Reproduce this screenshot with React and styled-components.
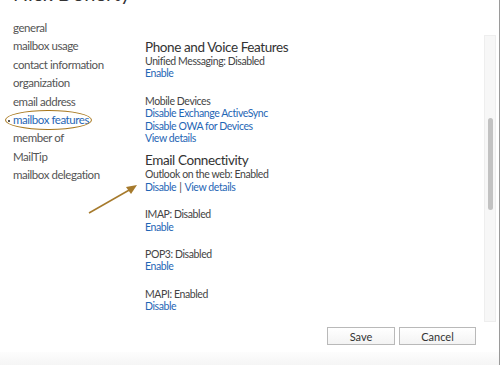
import React from "react";
import styled, { createGlobalStyle } from "styled-components";

const GlobalStyle = createGlobalStyle`
  html, body { margin: 0; padding: 0; background: #fff; }
  body { font-family: Lato, "Open Sans", sans-serif; overflow: hidden; }
`;

const navItems = [
  "general",
  "mailbox usage",
  "contact information",
  "organization",
  "email address",
  "mailbox features",
  "member of",
  "MailTip",
  "mailbox delegation",
];

const sections = [
  {
    title: "Phone and Voice Features",
    items: [
      { label: "Unified Messaging: Disabled", links: [["Enable"]] },
      {
        label: "Mobile Devices",
        links: [["Disable Exchange ActiveSync"], ["Disable OWA for Devices"], ["View details"]],
      },
    ],
  },
  {
    title: "Email Connectivity",
    items: [
      { label: "Outlook on the web: Enabled", links: [["Disable", "View details"]] },
      { label: "IMAP: Disabled", links: [["Enable"]] },
      { label: "POP3: Disabled", links: [["Enable"]] },
      { label: "MAPI: Enabled", links: [["Disable"]] },
    ],
  },
];

function App() {
  return (
    <>
      <GlobalStyle />
      <Page>
        <Header>
          <Title>Nick Doherty</Title>
        </Header>
        <Main>
          <Nav>
            {navItems.map((item) => (
              <NavItem key={item} $active={item === "mailbox features"}>
                {item}
              </NavItem>
            ))}
          </Nav>
          <Content>
            {sections.map((s) => (
              <Section key={s.title}>
                <SectionTitle>{s.title}</SectionTitle>
                {s.items.map((it) => (
                  <Item key={it.label}>
                    <Label>{it.label}</Label>
                    {it.links.map((row, i) => (
                      <LinkRow key={i}>
                        {row.map((l, j) => (
                          <React.Fragment key={l}>
                            {j > 0 && <Sep>|</Sep>}
                            <Link>{l}</Link>
                          </React.Fragment>
                        ))}
                      </LinkRow>
                    ))}
                  </Item>
                ))}
              </Section>
            ))}
          </Content>
          <ScrollTrack>
            <ScrollThumb />
          </ScrollTrack>
          <Arrow width="60" height="40" viewBox="0 0 60 40">
            <line x1="2" y1="31" x2="44" y2="7" stroke="#a67a2c" strokeWidth="1.5" />
            <polygon points="50,3 39,5 44,12" fill="#a67a2c" />
          </Arrow>
        </Main>
        <Footer>
          <Button $w={68}>Save</Button>
          <Button $w={77}>Cancel</Button>
        </Footer>
        <BottomStrip />
      </Page>
    </>
  );
}

const Page = styled.div`
  width: 499px;
  height: 365px;
  border-right: 1px solid #9a9a9a;
  display: flex;
  flex-direction: column;
  overflow: hidden;
`;

const Header = styled.div`
  height: 8px;
  padding-left: 13px;
`;

const Title = styled.div`
  margin-top: -17px;
  font-size: 20px;
  line-height: 20px;
  color: #333;
`;

const Main = styled.div`
  position: relative;
  height: 312px;
  display: flex;
`;

const Nav = styled.div`
  width: 132px;
  padding: 11px 0 0 13px;
  display: flex;
  flex-direction: column;
  align-items: flex-start;
`;

const NavItem = styled.div`
  position: relative;
  font-size: 11.5px;
  letter-spacing: -0.45px;
  line-height: 18.4px;
  color: ${(p) => (p.$active ? "#1f66b5" : "#555")};
  white-space: nowrap;
  ${(p) =>
    p.$active &&
    `
    &::after {
      content: "";
      position: absolute;
      left: -8px;
      right: -3px;
      top: -1px;
      bottom: -1px;
      border: 1.5px solid #a8781e;
      border-radius: 50%;
    }
    &::before {
      content: "";
      position: absolute;
      left: -5px;
      top: 9px;
      width: 2px;
      height: 2px;
      background: #222;
      border-radius: 50%;
    }
  `}
`;

const Content = styled.div`
  flex: 1;
  padding: 31px 0 0 0;
  display: flex;
  flex-direction: column;
  gap: 8px;
`;

const Section = styled.div`
  display: flex;
  flex-direction: column;
  gap: 15px;
`;

const SectionTitle = styled.div`
  font-size: 13.5px;
  letter-spacing: -0.4px;
  line-height: 16px;
  color: #333;
  margin-bottom: -15px;
`;

const Item = styled.div`
  display: flex;
  flex-direction: column;
`;

const Label = styled.div`
  font-size: 10.5px;
  letter-spacing: -0.4px;
  line-height: 12.4px;
  color: #444;
`;

const LinkRow = styled.div`
  font-size: 10.5px;
  letter-spacing: -0.4px;
  line-height: 12.4px;
  color: #1f66b5;
`;

const Link = styled.span`
  cursor: pointer;
`;

const Sep = styled.span`
  color: #444;
  margin: 0 3px;
`;

const ScrollTrack = styled.div`
  width: 10px;
  margin: 27px 3px 0 0;
  height: 285px;
  background: #f7f7f7;
  border: 1px solid #eee;
  display: flex;
  justify-content: center;
`;

const ScrollThumb = styled.div`
  width: 5px;
  height: 92px;
  margin-top: 82px;
  background: #c2c2c2;
  border-radius: 3px;
`;

const Arrow = styled.svg`
  position: absolute;
  left: 87px;
  top: 174px;
`;

const Footer = styled.div`
  display: flex;
  justify-content: flex-end;
  gap: 4px;
  padding: 7px 23px 0 0;
  height: 25px;
`;

const Button = styled.button`
  width: ${(p) => p.$w}px;
  height: 18px;
  padding: 0;
  font-family: Lato, "Open Sans", sans-serif;
  font-size: 11px;
  color: #333;
  background: linear-gradient(#fff, #f3f3f3);
  border: 1px solid #b9b9b9;
`;

const BottomStrip = styled.div`
  flex: 1;
  background: linear-gradient(#fdfdfd, #f5f5f5);
`;

export default App;
